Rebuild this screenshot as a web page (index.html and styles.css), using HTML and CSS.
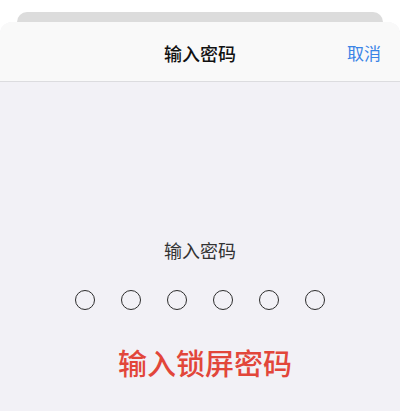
FILE: index.html
```html
<!DOCTYPE html>
<html lang="zh">
<head>
<meta charset="utf-8">
<link rel="stylesheet" href="styles.css">
</head>
<body>
<div class="page">
  <div class="back-card"></div>
  <div class="sheet">
    <div class="header">
      <span class="spacer"></span>
      <span class="title">输入密码</span>
      <span class="cancel">取消</span>
    </div>
    <div class="content">
      <div class="prompt">输入密码</div>
      <div class="dots">
        <span class="dot"></span><span class="dot"></span><span class="dot"></span>
        <span class="dot"></span><span class="dot"></span><span class="dot"></span>
      </div>
      <div class="caption">输入锁屏密码</div>
    </div>
  </div>
</div>
</body>
</html>
```
FILE: styles.css
```css
html, body {
  margin: 0;
  padding: 0;
  background: #ffffff;
  font-family: "Noto Sans CJK SC", "Noto Sans", sans-serif;
}
.page {
  width: 400px;
  height: 411px;
  padding-top: 12px;
  box-sizing: border-box;
  display: flex;
  flex-direction: column;
  overflow: hidden;
}
.back-card {
  margin: 0 17px;
  height: 10px;
  background: #dcdcdc;
  border-radius: 10px 10px 0 0;
  flex: none;
}
.sheet {
  flex: 1;
  background: #f2f1f6;
  border-radius: 12px 12px 0 0;
  overflow: hidden;
  display: flex;
  flex-direction: column;
}
.header {
  height: 59px;
  flex: none;
  background: #f9f9f9;
  border-bottom: 1px solid #dcdcdf;
  display: grid;
  grid-template-columns: 1fr auto 1fr;
  align-items: center;
  padding: 0 19px;
}
.title {
  font-size: 18px;
  line-height: 24px;
  font-weight: 500;
  color: #111;
  padding-top: 2px;
}
.cancel {
  justify-self: end;
  font-size: 17px;
  line-height: 24px;
  color: #3a84e6;
  padding-top: 2px;
}
.content {
  display: flex;
  flex-direction: column;
  align-items: center;
  padding-top: 156px;
}
.prompt {
  font-size: 18px;
  line-height: 24px;
  color: #333;
}
.dots {
  display: flex;
  gap: 26px;
  margin-top: 28px;
}
.dot {
  width: 20px;
  height: 20px;
  box-sizing: border-box;
  border: 1.8px solid #2c2c2c;
  border-radius: 50%;
}
.caption {
  margin-top: 34px;
  padding-left: 10px;
  font-size: 29px;
  line-height: 36px;
  font-weight: 500;
  color: #e2463a;
}
```
